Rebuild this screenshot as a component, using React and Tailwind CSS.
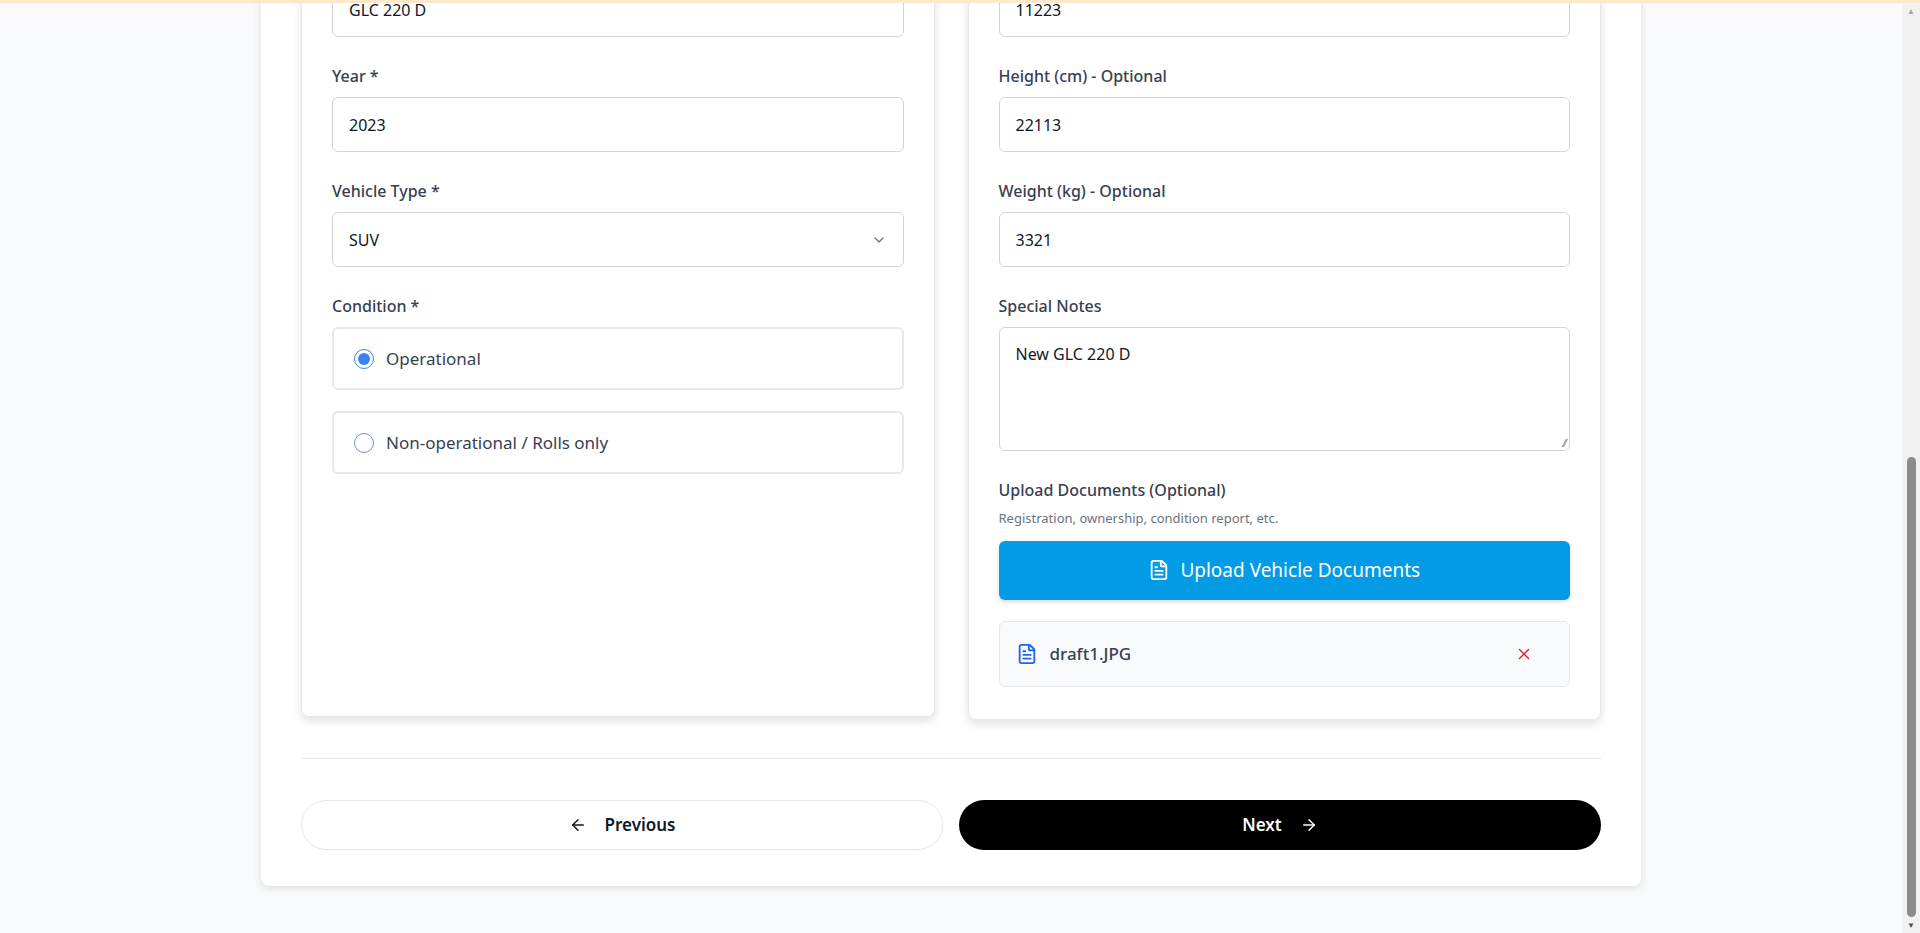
import { FileText, ChevronDown, X, ArrowLeft, ArrowRight } from 'lucide-react'

const font = { fontFamily: '"Noto Sans", "Open Sans", sans-serif' }

function Label({ children }) {
  return <label className="block text-[16px] font-medium text-[#374151] mb-[10px] leading-[22px]">{children}</label>
}

function Input({ value }) {
  return (
    <div className="h-[55px] w-full rounded-md border border-[#d1d5db] bg-white px-4 flex items-center text-[16px] text-[#111827]">
      {value}
    </div>
  )
}

function Field({ label, value, first }) {
  return (
    <div className={first ? '' : 'mt-[28px]'}>
      {label && <Label>{label}</Label>}
      <Input value={value} />
    </div>
  )
}

function Radio({ checked, label }) {
  return (
    <div className="h-[63px] w-full rounded-md border-2 border-[#e5e7eb] bg-white px-5 flex items-center gap-[12px]">
      <span className={`w-[20px] h-[20px] rounded-full border flex items-center justify-center ${checked ? 'border-[#3b82f6]' : 'border-[#6b8fd6]'}`}>
        {checked && <span className="w-[12px] h-[12px] rounded-full bg-[#3b82f6]" />}
      </span>
      <span className="text-[17px] text-[#374151]">{label}</span>
    </div>
  )
}

export default function App() {
  return (
    <div className="h-[933px] w-full overflow-hidden flex bg-[#f9fafb] border-t-[3px] border-[#fde8cc]" style={font}>
      <div className="flex-1 flex justify-center overflow-hidden">
        <div className="w-[1380px] mt-[-21px] self-start bg-white rounded-b-lg shadow-[0_2px_8px_rgba(0,0,0,0.12)] px-[40px] pb-[36px]">
          <div className="grid grid-cols-2 gap-[33px]">
            {/* Left card */}
            <div className="rounded-b-lg border border-t-0 border-[#e5e7eb] shadow-[0_4px_10px_rgba(0,0,0,0.12)] px-[30px] pb-[40px] h-[735px]">
              <Field value="GLC 220 D" first />
              <Field label="Year *" value="2023" />
              <div className="mt-[28px]">
                <Label>Vehicle Type *</Label>
                <div className="h-[55px] w-full rounded-md border border-[#d1d5db] bg-white px-4 flex items-center justify-between text-[16px] text-[#111827]">
                  SUV
                  <ChevronDown className="w-[16px] h-[16px] text-[#6b7280]" />
                </div>
              </div>
              <div className="mt-[28px]">
                <Label>Condition *</Label>
                <div className="flex flex-col gap-[21px]">
                  <Radio checked label="Operational" />
                  <Radio label="Non-operational / Rolls only" />
                </div>
              </div>
            </div>
            {/* Right card */}
            <div className="rounded-b-lg border border-t-0 border-[#e5e7eb] shadow-[0_4px_10px_rgba(0,0,0,0.12)] px-[30px] pb-[32px]">
              <Field value="11223" first />
              <Field label="Height (cm) - Optional" value="22113" />
              <Field label="Weight (kg) - Optional" value="3321" />
              <div className="mt-[28px]">
                <Label>Special Notes</Label>
                <div className="relative h-[124px] w-full rounded-md border border-[#d1d5db] px-4 pt-[14px] text-[16px] text-[#111827]">
                  New GLC 220 D
                  <span className="absolute right-[3px] bottom-[2px] text-[10px] text-[#6b7280] leading-none">⁄⁄</span>
                </div>
              </div>
              <div className="mt-[28px]">
                <Label>Upload Documents (Optional)</Label>
                <p className="text-[13px] text-[#6b7280] mt-[-2px] mb-[12px]">Registration, ownership, condition report, etc.</p>
                <div className="h-[59px] w-full rounded-md bg-[#039be5] shadow-[0_2px_4px_rgba(0,0,0,0.15)] flex items-center justify-center gap-[10px] text-white text-[19px]">
                  <FileText className="w-[22px] h-[22px]" />
                  Upload Vehicle Documents
                </div>
                <div className="mt-[21px] h-[66px] w-full rounded-md border border-[#e5e7eb] bg-[#f9fafb] px-[16px] flex items-center justify-between">
                  <div className="flex items-center gap-[12px]">
                    <FileText className="w-[22px] h-[22px] text-[#2563eb]" />
                    <span className="text-[17px] text-[#374151] font-medium">draft1.JPG</span>
                  </div>
                  <X className="w-[18px] h-[18px] text-[#dc2626] mr-[20px]" />
                </div>
              </div>
            </div>
          </div>
          <div className="mt-[38px] border-t border-[#e5e7eb] pt-[41px] grid grid-cols-2 gap-[16px]">
            <button className="h-[50px] rounded-full border border-[#e5e7eb] bg-white flex items-center justify-center gap-[18px] text-[17px] font-semibold text-[#111827]">
              <ArrowLeft className="w-[18px] h-[18px]" />
              Previous
            </button>
            <button className="h-[50px] rounded-full bg-black flex items-center justify-center gap-[18px] text-[17px] font-semibold text-white">
              Next
              <ArrowRight className="w-[18px] h-[18px]" />
            </button>
          </div>
        </div>
      </div>
      <div className="w-[18px] bg-[#f1f1f1] flex flex-col items-center py-[4px]">
        <span className="text-[8px] text-[#a3a3a3] leading-none">▲</span>
        <div className="mt-[442px] w-[9px] h-[460px] rounded-full bg-[#8b8b8b]" />
        <span className="mt-auto text-[8px] text-[#505050] leading-none">▼</span>
      </div>
    </div>
  )
}
